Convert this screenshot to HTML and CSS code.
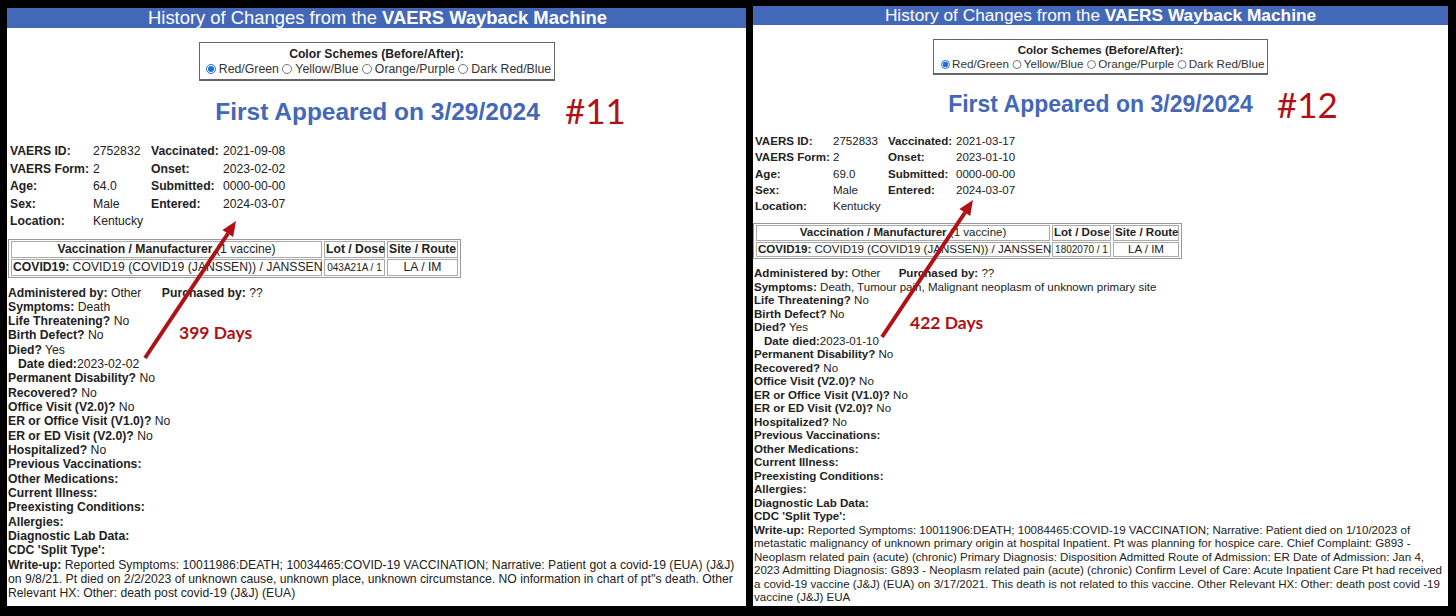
FILE: index.html
```html
<!DOCTYPE html>
<html lang="en">
<head>
    <meta charset="UTF-8">
    <title>VAERS Wayback Machine</title>
    <link rel="stylesheet" href="styles.css">
</head>
<body>
    <div class="page">
        <div class="panel panel-a">
            <div class="title-bar">History of Changes from the <b>VAERS Wayback Machine</b></div>
            <div class="scheme-box">
                <div class="scheme-title">Color Schemes (Before/After):</div>
                <label><input type="radio" name="a" checked>Red/Green</label>
                <label><input type="radio" name="a">Yellow/Blue</label>
                <label><input type="radio" name="a">Orange/Purple</label>
                <label><input type="radio" name="a">Dark Red/Blue</label>
            </div>
            <h2 class="appeared">First Appeared on 3/29/2024</h2>
            <div class="info">
                <b>VAERS ID:</b><span>2752832</span><b>Vaccinated:</b><span>2021-09-08</span>
                <b>VAERS Form:</b><span>2</span><b>Onset:</b><span>2023-02-02</span>
                <b>Age:</b><span>64.0</span><b>Submitted:</b><span>0000-00-00</span>
                <b>Sex:</b><span>Male</span><b>Entered:</b><span>2024-03-07</span>
                <b>Location:</b><span>Kentucky</span>
            </div>
            <table class="vax">
                <tr><th class="c1"><b>Vaccination / Manufacturer</b> <span class="normal">(1 vaccine)</span></th><th class="c2">Lot / Dose</th><th class="c3">Site / Route</th></tr>
                <tr><td class="c1 left"><b>COVID19:</b> COVID19 (COVID19 (JANSSEN)) / JANSSEN</td><td class="c2 small">043A21A / 1</td><td class="c3">LA / IM</td></tr>
            </table>
            <div class="details">
                <div><b>Administered by:</b> Other <b class="purchased">Purchased by:</b> ??</div>
                <div><b>Symptoms:</b> Death</div>
                <div><b>Life Threatening?</b> No</div>
                <div><b>Birth Defect?</b> No</div>
                <div><b>Died?</b> Yes</div>
                <div class="indent"><b>Date died:</b>2023-02-02</div>
                <div><b>Permanent Disability?</b> No</div>
                <div><b>Recovered?</b> No</div>
                <div><b>Office Visit (V2.0)?</b> No</div>
                <div><b>ER or Office Visit (V1.0)?</b> No</div>
                <div><b>ER or ED Visit (V2.0)?</b> No</div>
                <div><b>Hospitalized?</b> No</div>
                <div><b>Previous Vaccinations:</b></div>
                <div><b>Other Medications:</b></div>
                <div><b>Current Illness:</b></div>
                <div><b>Preexisting Conditions:</b></div>
                <div><b>Allergies:</b></div>
                <div><b>Diagnostic Lab Data:</b></div>
                <div><b>CDC 'Split Type':</b></div>
                <div><b>Write-up:</b> Reported Symptoms: 10011986:DEATH; 10034465:COVID-19 VACCINATION; Narrative: Patient got a covid-19 (EUA) (J&amp;J) on 9/8/21. Pt died on 2/2/2023 of unknown cause, unknown place, unknown circumstance. NO information in chart of pt''s death. Other Relevant HX: Other: death post covid-19 (J&amp;J) (EUA)</div>
            </div>
            <div class="case-no">#11</div>
            <div class="days">399 Days</div>
            <svg class="arrow" width="110" height="155" viewBox="0 0 110 155">
                <line x1="7" y1="144" x2="90" y2="19.5" stroke="#b01116" stroke-width="4"/>
                <polygon points="98,7 95.2,23.1 84.4,16.1" fill="#b01116"/>
            </svg>
        </div>

        <div class="panel panel-b">
            <div class="title-bar">History of Changes from the <b>VAERS Wayback Machine</b></div>
            <div class="scheme-box">
                <div class="scheme-title">Color Schemes (Before/After):</div>
                <label><input type="radio" name="b" checked>Red/Green</label>
                <label><input type="radio" name="b">Yellow/Blue</label>
                <label><input type="radio" name="b">Orange/Purple</label>
                <label><input type="radio" name="b">Dark Red/Blue</label>
            </div>
            <h2 class="appeared">First Appeared on 3/29/2024</h2>
            <div class="info">
                <b>VAERS ID:</b><span>2752833</span><b>Vaccinated:</b><span>2021-03-17</span>
                <b>VAERS Form:</b><span>2</span><b>Onset:</b><span>2023-01-10</span>
                <b>Age:</b><span>69.0</span><b>Submitted:</b><span>0000-00-00</span>
                <b>Sex:</b><span>Male</span><b>Entered:</b><span>2024-03-07</span>
                <b>Location:</b><span>Kentucky</span>
            </div>
            <table class="vax">
                <tr><th class="c1"><b>Vaccination / Manufacturer</b> <span class="normal">(1 vaccine)</span></th><th class="c2">Lot / Dose</th><th class="c3">Site / Route</th></tr>
                <tr><td class="c1 left"><b>COVID19:</b> COVID19 (COVID19 (JANSSEN)) / JANSSEN</td><td class="c2 small">1802070 / 1</td><td class="c3">LA / IM</td></tr>
            </table>
            <div class="details">
                <div><b>Administered by:</b> Other <b class="purchased">Purchased by:</b> ??</div>
                <div><b>Symptoms:</b> Death, Tumour pain, Malignant neoplasm of unknown primary site</div>
                <div><b>Life Threatening?</b> No</div>
                <div><b>Birth Defect?</b> No</div>
                <div><b>Died?</b> Yes</div>
                <div class="indent"><b>Date died:</b>2023-01-10</div>
                <div><b>Permanent Disability?</b> No</div>
                <div><b>Recovered?</b> No</div>
                <div><b>Office Visit (V2.0)?</b> No</div>
                <div><b>ER or Office Visit (V1.0)?</b> No</div>
                <div><b>ER or ED Visit (V2.0)?</b> No</div>
                <div><b>Hospitalized?</b> No</div>
                <div><b>Previous Vaccinations:</b></div>
                <div><b>Other Medications:</b></div>
                <div><b>Current Illness:</b></div>
                <div><b>Preexisting Conditions:</b></div>
                <div><b>Allergies:</b></div>
                <div><b>Diagnostic Lab Data:</b></div>
                <div><b>CDC 'Split Type':</b></div>
                <div><b>Write-up:</b> Reported Symptoms: 10011906:DEATH; 10084465:COVID-19 VACCINATION; Narrative: Patient died on 1/10/2023 of metastatic malignancy of unknown primary origin at hospital Inpatient. Pt was planning for hospice care. Chief Complaint: G893 - Neoplasm related pain (acute) (chronic) Primary Diagnosis: Disposition Admitted Route of Admission: ER Date of Admission: Jan 4, 2023 Admitting Diagnosis: G893 - Neoplasm related pain (acute) (chronic) Confirm Level of Care: Acute Inpatient Care Pt had received a covid-19 vaccine (J&amp;J) (EUA) on 3/17/2021. This death is not related to this vaccine. Other Relevant HX: Other: death post covid -19 vaccine (J&amp;J) EUA</div>
            </div>
            <div class="case-no">#12</div>
            <div class="days">422 Days</div>
            <svg class="arrow" width="110" height="155" viewBox="0 0 110 155">
                <line x1="7" y1="144" x2="90" y2="19.5" stroke="#b01116" stroke-width="4"/>
                <polygon points="98,7 95.2,23.1 84.4,16.1" fill="#b01116"/>
            </svg>
        </div>
    </div>
</body>
</html>
```

FILE: styles.css
```css
html, body {
    margin: 0;
    height: 100%;
    background-color: #000;
}

body {
    overflow: hidden;
    font-family: "Liberation Sans", Arial, sans-serif;
    color: #222;
}

.page {
    display: flex;
    align-items: flex-end;
    height: 606px;
    padding-left: 7px;
    gap: 7px;
}

.panel {
    position: relative;
    background-color: #fff;
    box-sizing: border-box;
}

.panel-a {
    width: 739px;
    height: 598px;
    font-size: 12.2px;
}

.panel-b {
    width: 695px;
    height: 600px;
    font-size: 11.55px;
}

.title-bar {
    background-color: #4468b8;
    color: #fff;
    text-align: center;
    font-size: 18.4px;
    line-height: 20px;
    padding-left: 2px;
}

.panel-b .title-bar {
    font-size: 17.3px;
    line-height: 19px;
    padding-left: 0;
}

.scheme-box {
    box-sizing: border-box;
    margin: 14px auto 0;
    width: 356px;
    height: 39px;
    border: 1px solid #666;
    border-bottom-width: 2px;
    text-align: center;
    line-height: 15px;
    padding-top: 4px;
    white-space: nowrap;
    color: #333;
}

.panel-b .scheme-box {
    width: 335px;
    height: 36px;
    margin-top: 14px;
    line-height: 14px;
    padding-top: 3px;
}

.scheme-title {
    font-weight: bold;
    color: #222;
}

.scheme-box label {
    font-size: 12.3px;
}

.scheme-box label:first-of-type {
    margin-left: 4px;
}

.panel-b .scheme-box label {
    font-size: 11.65px;
}

.scheme-box input {
    width: 10px;
    height: 10px;
    margin: 0 3px 0 0;
    vertical-align: -1px;
    accent-color: #1a6fd8;
}

.panel-b .scheme-box input {
    width: 9.5px;
    height: 9.5px;
    margin-right: 2px;
}

.appeared {
    margin: 15px 0 0;
    text-align: center;
    color: #4468b8;
    font-size: 24.5px;
    line-height: 32px;
    font-weight: bold;
    padding-left: 2px;
}

.panel-b .appeared {
    font-size: 23px;
    line-height: 30px;
    margin-top: 14px;
    padding-left: 0;
}

.info {
    display: grid;
    grid-template-columns: 83px 58px 72px auto;
    grid-auto-rows: 17.5px;
    margin: 15px 0 0 3px;
    line-height: 17.5px;
}

.panel-b .info {
    grid-template-columns: 78px 55px 68px auto;
    grid-auto-rows: 16.3px;
    line-height: 16.3px;
    margin: 14px 0 0 2px;
}

.vax {
    border-collapse: separate;
    border-spacing: 2px 1px;
    border: 1px solid #999;
    margin: 8px 0 0 1px;
    white-space: nowrap;
    table-layout: fixed;
    width: 453px;
}

.panel-b .vax {
    width: 429px;
    margin: 9px 0 0 0;
}

.vax th, .vax td {
    border: 1px solid #aaa;
    padding: 0 1px;
    height: 15px;
    line-height: 15px;
    text-align: center;
}

.panel-b .vax th, .panel-b .vax td {
    height: 13.5px;
    line-height: 13.5px;
}

.vax .c2 { width: 57px; }
.vax .c3 { width: 67px; }
.panel-b .vax .c2 { width: 55px; }
.panel-b .vax .c3 { width: 62px; }

.vax .left { text-align: left; }
.vax .small { font-size: 10px; }
.vax .normal { font-weight: normal; }

.details {
    margin: 8px 7px 0 1px;
    line-height: 14.33px;
}

.panel-b .details {
    line-height: 13.5px;
    margin: 8px 3px 0 1px;
}

.purchased {
    margin-left: 17px;
}

.panel-b .purchased {
    margin-left: 15px;
}

.indent {
    padding-left: 10px;
}

.case-no {
    position: absolute;
    left: 558px;
    top: 80px;
    font-family: Lato, sans-serif;
    font-size: 35px;
    line-height: 44px;
    color: #b01116;
}

.panel-b .case-no {
    left: 524px;
    top: 76px;
}

.days {
    position: absolute;
    left: 172px;
    top: 315px;
    font-family: Lato, sans-serif;
    font-weight: bold;
    font-size: 17.5px;
    line-height: 20px;
    color: #b01116;
}

.panel-b .days {
    left: 157px;
    top: 307px;
}

.arrow {
    position: absolute;
    left: 131px;
    top: 206px;
}

.panel-b .arrow {
    left: 122px;
    top: 187px;
}
```
